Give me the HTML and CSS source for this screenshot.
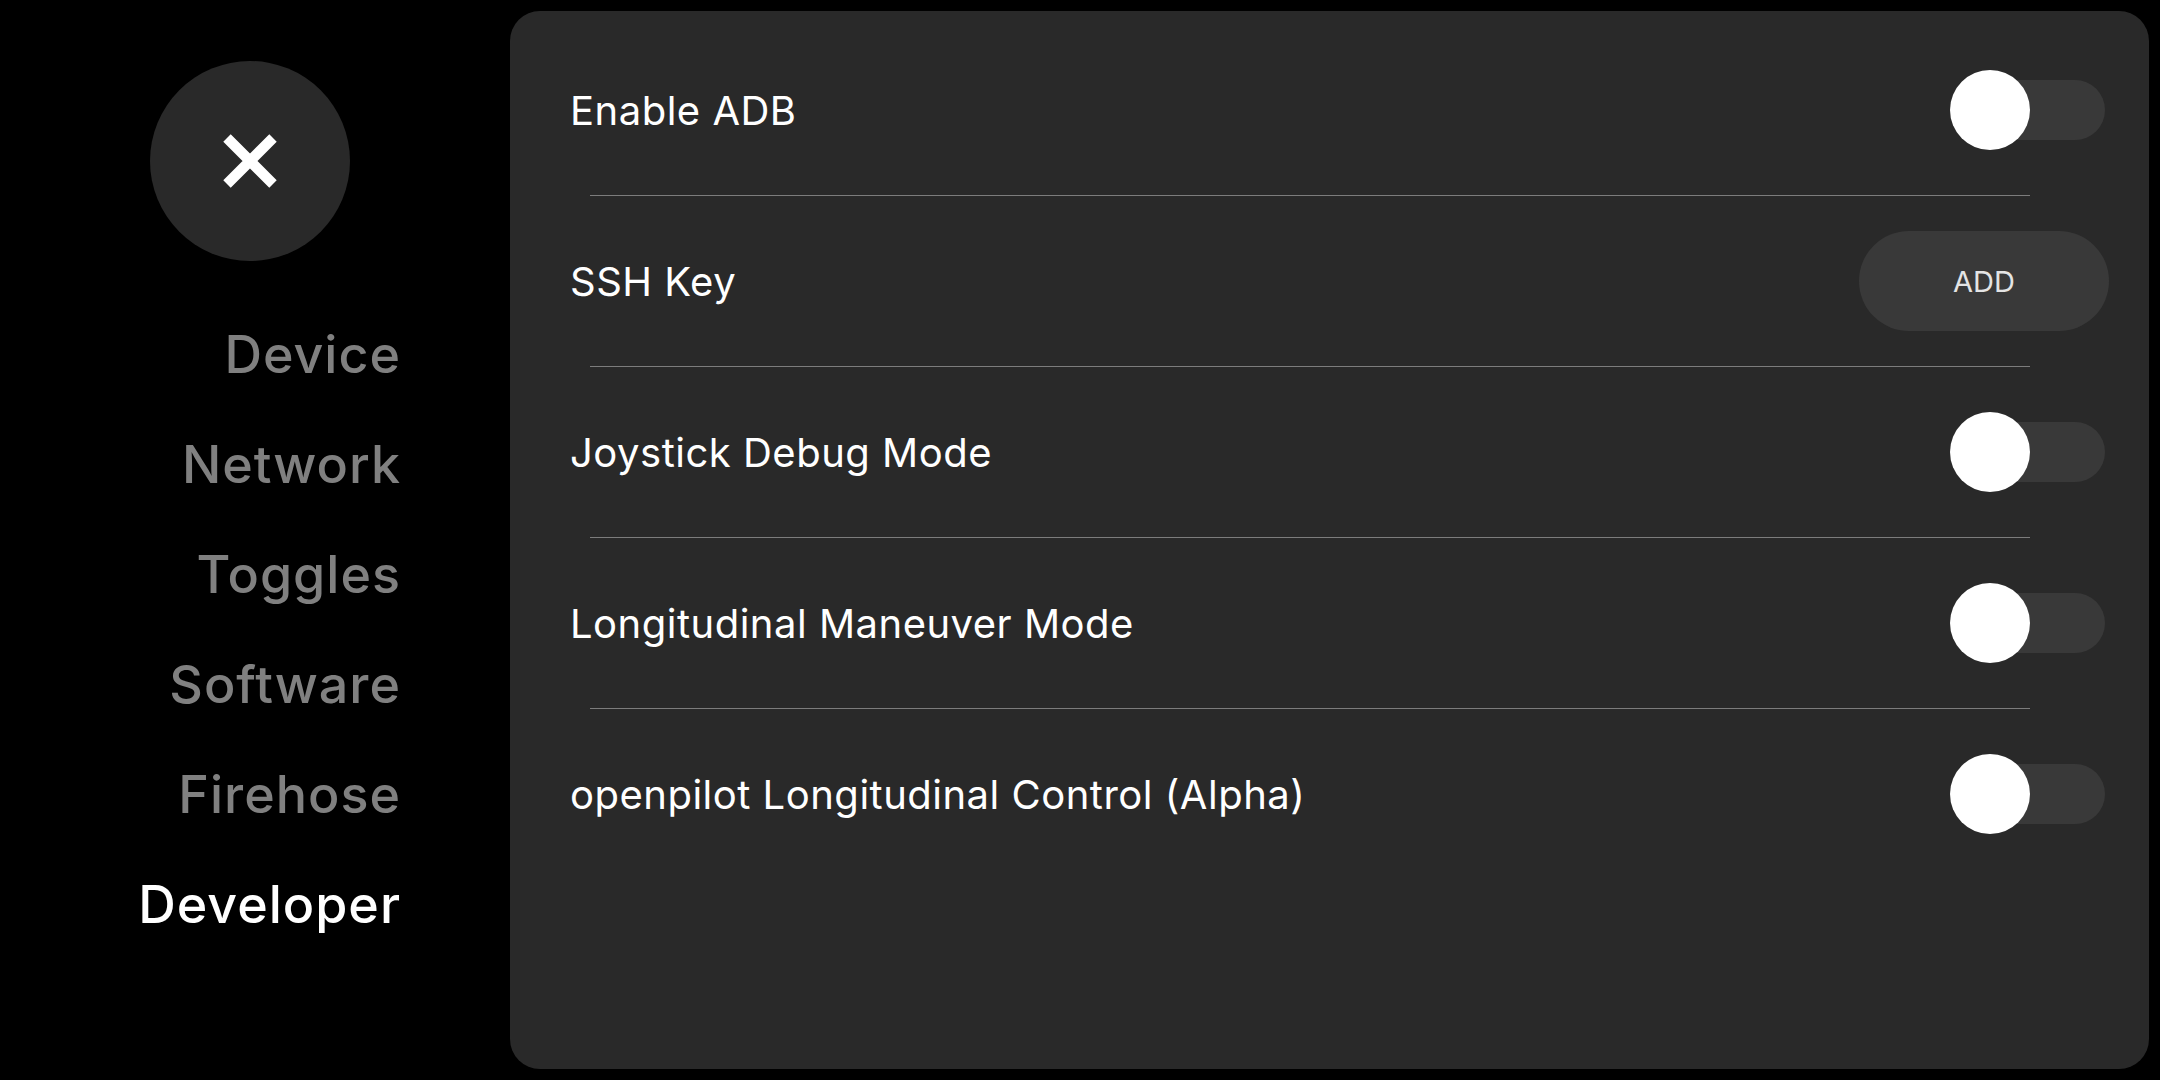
FILE: index.html
```html
<!DOCTYPE html>
<html lang="en">
<head>
<meta charset="utf-8">
<title>Settings - Developer</title>
<link rel="stylesheet" href="styles.css">
</head>
<body>
<div class="screen">
  <aside class="sidebar">
    <button class="close-btn" aria-label="Close">
      <svg class="close-icon" viewBox="0 0 54 54" width="54" height="54">
        <path d="M4 4 L50 50 M50 4 L4 50" stroke="#ffffff" stroke-width="10.5" stroke-linecap="butt" fill="none"/>
      </svg>
    </button>
    <nav class="nav">
      <div class="nav-item">Device</div>
      <div class="nav-item">Network</div>
      <div class="nav-item">Toggles</div>
      <div class="nav-item">Software</div>
      <div class="nav-item">Firehose</div>
      <div class="nav-item active">Developer</div>
    </nav>
  </aside>
  <main class="panel">
    <div class="row">
      <span class="label">Enable ADB</span>
      <div class="toggle"><div class="track"></div><div class="knob"></div></div>
    </div>
    <div class="sep"></div>
    <div class="row">
      <span class="label">SSH Key</span>
      <button class="btn-add">ADD</button>
    </div>
    <div class="sep"></div>
    <div class="row">
      <span class="label">Joystick Debug Mode</span>
      <div class="toggle"><div class="track"></div><div class="knob"></div></div>
    </div>
    <div class="sep"></div>
    <div class="row">
      <span class="label">Longitudinal Maneuver Mode</span>
      <div class="toggle"><div class="track"></div><div class="knob"></div></div>
    </div>
    <div class="sep"></div>
    <div class="row">
      <span class="label">openpilot Longitudinal Control (Alpha)</span>
      <div class="toggle"><div class="track"></div><div class="knob"></div></div>
    </div>
  </main>
</div>
</body>
</html>
```

FILE: styles.css
```css
* {
  box-sizing: border-box;
}

html, body {
  margin: 0;
  padding: 0;
  background: #000000;
  width: 2160px;
  height: 1080px;
  overflow: hidden;
  font-family: Inter, "Noto Sans", "Liberation Sans", sans-serif;
  color: #ffffff;
}

.screen {
  display: flex;
  width: 2160px;
  height: 1080px;
}

.sidebar {
  width: 510px;
  flex: none;
  display: flex;
  flex-direction: column;
  padding: 61px 110px 0 150px;
}

.close-btn {
  width: 200px;
  height: 200px;
  border-radius: 50%;
  background: #292929;
  border: none;
  padding: 0;
  display: flex;
  align-items: center;
  justify-content: center;
}

.close-icon {
  display: block;
}

.nav {
  margin-top: 39px;
  display: flex;
  flex-direction: column;
  align-items: flex-end;
}

.nav-item {
  font-size: 52px;
  line-height: 110px;
  height: 110px;
  color: #808080;
  font-weight: 500;
  letter-spacing: 1px;
  margin-right: -1px;
  white-space: nowrap;
}

.nav-item.active {
  color: #ffffff;
}

.panel {
  flex: 1;
  margin: 11px 11px 11px 0;
  background: #292929;
  border-radius: 30px;
  padding: 14px 44px 0 60px;
  display: flex;
  flex-direction: column;
}

.row {
  height: 170px;
  display: flex;
  align-items: center;
  justify-content: space-between;
}

.label {
  font-size: 40px;
  letter-spacing: 0.5px;
  color: #ffffff;
  white-space: nowrap;
}

.sep {
  height: 1px;
  background: #7c7c7c;
  margin: 0 75px 0 20px;
}

.toggle {
  position: relative;
  width: 155px;
  height: 80px;
  flex: none;
}

.track {
  position: absolute;
  left: 5px;
  right: 0;
  top: 10px;
  height: 60px;
  border-radius: 30px;
  background: #393939;
}

.knob {
  position: absolute;
  left: 0;
  top: 0;
  width: 80px;
  height: 80px;
  border-radius: 50%;
  background: #ffffff;
}

.btn-add {
  width: 250px;
  height: 100px;
  border-radius: 50px;
  border: none;
  background: #393939;
  color: #e4e4e4;
  font-family: Inter, "Noto Sans", "Liberation Sans", sans-serif;
  font-size: 29px;
  font-weight: 400;
  margin-right: -4px;
  padding: 0;
}
```
